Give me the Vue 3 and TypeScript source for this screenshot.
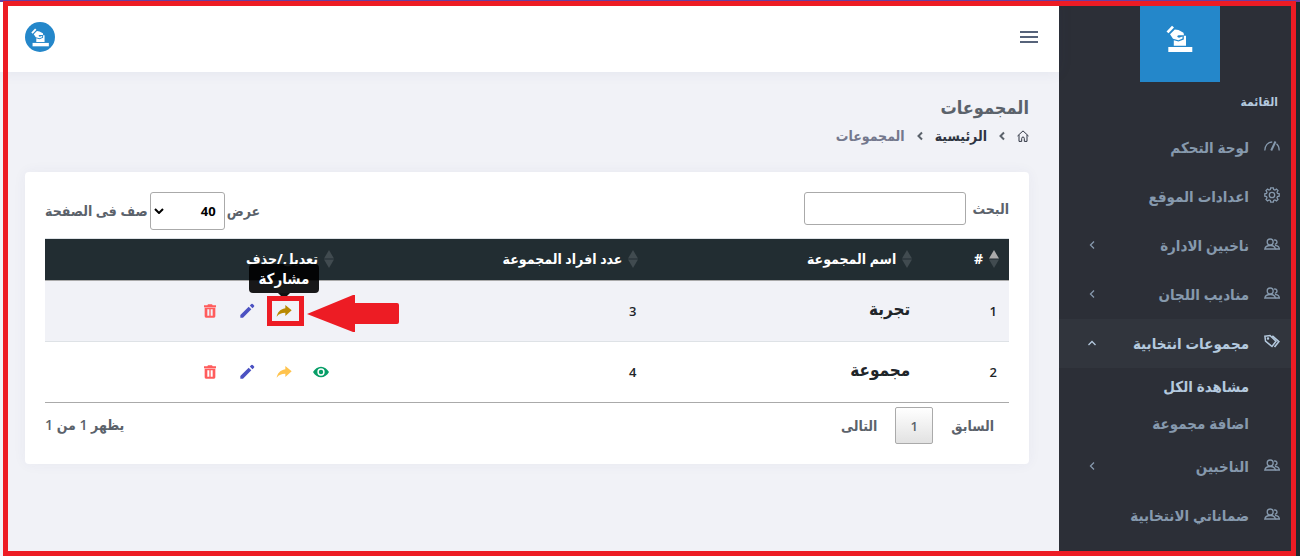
<script setup lang="ts">
import { ref } from 'vue'

interface MenuItem {
  label: string
  icon: 'gauge' | 'gear' | 'users' | 'tags'
  arrow?: boolean
  active?: boolean
  children?: { label: string; active?: boolean }[]
}

interface Group {
  id: number
  name: string
  members: number
  annotated?: boolean
}

const menu: MenuItem[] = [
  { label: 'لوحة التحكم', icon: 'gauge' },
  { label: 'اعدادات الموقع', icon: 'gear' },
  { label: 'ناخبين الادارة', icon: 'users', arrow: true },
  { label: 'مناديب اللجان', icon: 'users', arrow: true },
  {
    label: 'مجموعات انتخابية',
    icon: 'tags',
    arrow: true,
    active: true,
    children: [{ label: 'مشاهدة الكل', active: true }, { label: 'اضافة مجموعة' }],
  },
  { label: 'الناخبين', icon: 'users', arrow: true },
  { label: 'ضماناتي الانتخابية', icon: 'users' },
]

const columns = ['#', 'اسم المجموعة', 'عدد افراد المجموعة', 'تعديل/حذف']

const groups: Group[] = [
  { id: 1, name: 'تجربة', members: 3, annotated: true },
  { id: 2, name: 'مجموعة', members: 4 },
]

const logoPaths = [
  'M.5 6.500 6 .8 8 2.600 2.500 8.300Z',
  'M4 9.200 8.800 4.600 12.500 5 17.500 7.800 18 10.200H12.500Q10.500 10.800 11.500 12L13 12.800 16.500 11.500V13.500L12.500 15.200 7 13.800Z',
  'M7.800 15.200 12.500 16.500 17.800 14.500V10.800H20V20.700H7.800Z',
  'M2.300 22H26.300V27H2.300Z',
]

const search = ref('')
const pageSize = ref('40')
</script>

<template>
  <div class="app" dir="rtl" lang="ar">
    <aside class="sidebar">
      <a class="brand" href="#" aria-label="الرئيسية">
        <svg class="brand-icon" viewBox="0 0 28 28" aria-hidden="true">
          <path v-for="d in logoPaths" :key="d" :d="d" fill="#fff" />
        </svg>
      </a>
      <p class="menu-title">القائمة</p>
      <nav>
        <ul class="menu">
          <li v-for="item in menu" :key="item.label">
            <a class="menu-link" :class="{ active: item.active }" href="#">
              <svg class="menu-icon" viewBox="0 0 16 16" aria-hidden="true">
                <g v-if="item.icon === 'gauge'">
                  <path d="M.8 12.500C.8 7.500 4 4 8.200 4M12.500 5.800C14.500 7.500 15.200 10 15.200 12.500" />
                  <path d="M7.200 12.500 11.500 3.500" stroke-width="2" />
                </g>
                <g v-else-if="item.icon === 'gear'">
                  <path d="M6.700.8h2.600l.4 1.800 1.200.5 1.600-1 1.500 1.500-1 1.600.5 1.200 1.700.4v2.400l-1.700.4-.5 1.200 1 1.600-1.500 1.500-1.600-1-1.200.5-.4 1.800H6.700l-.4-1.800-1.200-.5-1.600 1L2 12.400l1-1.600-.5-1.200-1.700-.4V6.800l1.700-.4L3 5.200 2 3.600l1.500-1.500 1.600 1 1.200-.5Z" />
                  <circle cx="8" cy="8" r="2.700" />
                </g>
                <g v-else-if="item.icon === 'users'">
                  <circle cx="6.200" cy="6" r="3" />
                  <path d="M.8 13C1.200 10.800 3 9.600 6.200 9.500S11 11 11.500 13Z" />
                  <path d="M10 4.200c1.800-.6 3 .4 3 1.900 0 1.200-.9 2.100-2.200 2.300M11 9.700c2.600-.4 4 1.100 4.400 3.300H11.500" />
                </g>
                <g v-else>
                  <path d="M.9 2.200 6 1.500 12 7.300 8 12.500 1.500 7Z" stroke-width="1.500" />
                  <path d="M8.300 1.800 14.800 7.700 10.500 13" stroke-width="1.700" />
                  <circle cx="4" cy="4.500" r=".6" />
                </g>
              </svg>
              <span>{{ item.label }}</span>
              <svg v-if="item.arrow" class="menu-arrow" viewBox="0 0 10 10" aria-hidden="true">
                <path :d="item.active ? 'M1.500 7 5 3.500 8.500 7' : 'M7 1.500 3.500 5 7 8.500'" />
              </svg>
            </a>
            <ul v-if="item.children" class="submenu">
              <li v-for="child in item.children" :key="child.label">
                <a class="submenu-link" :class="{ active: child.active }" href="#">{{ child.label }}</a>
              </li>
            </ul>
          </li>
        </ul>
      </nav>
    </aside>

    <div class="main">
      <header class="topbar">
        <button class="toggle" type="button" aria-label="القائمة"><i></i><i></i><i></i></button>
        <button class="avatar" type="button" aria-label="الحساب">
          <svg viewBox="0 0 28 28" aria-hidden="true">
            <path v-for="d in logoPaths" :key="d" :d="d" fill="#fff" />
          </svg>
        </button>
      </header>

      <main class="content">
        <h1 class="title">المجموعات</h1>
        <nav class="crumbs" aria-label="مسار التنقل">
          <a href="#" aria-label="الرئيسية">
            <svg class="home" viewBox="0 0 12 12" aria-hidden="true">
              <path d="M.5 6 6 .9 11.500 6M2 5v6.400h2.700V8.500Q4.700 7 6 7t1.300 1.500v2.900H10V5" />
            </svg>
          </a>
          <svg class="sep" viewBox="0 0 6 10" aria-hidden="true"><path d="M5 1.500 1.500 5 5 8.500" /></svg>
          <a href="#">الرئيسية</a>
          <svg class="sep" viewBox="0 0 6 10" aria-hidden="true"><path d="M5 1.500 1.500 5 5 8.500" /></svg>
          <span>المجموعات</span>
        </nav>

        <section class="card">
          <div class="controls">
            <div class="field search">
              <label for="search">البحث</label>
              <input id="search" v-model="search" type="search" />
            </div>
            <div class="field">
              <label for="size">عرض</label>
              <div class="select">
                <select id="size" v-model="pageSize">
                  <option>10</option>
                  <option>40</option>
                  <option>100</option>
                </select>
                <svg viewBox="0 0 10 6" aria-hidden="true"><path d="M1 1 5 5 9 1" /></svg>
              </div>
              <span>صف فى الصفحة</span>
            </div>
          </div>

          <table class="table">
            <thead>
              <tr>
                <th v-for="(column, index) in columns" :key="column" scope="col">
                  <span class="head">
                    <svg class="sort" viewBox="0 0 10 18" aria-hidden="true">
                      <path :class="{ on: index === 0 }" d="M0 8.500 5 0 10 8.500Z" />
                      <path d="M0 9.500h10L5 18Z" />
                    </svg>
                    {{ column }}
                  </span>
                </th>
              </tr>
            </thead>
            <tbody>
              <tr v-for="group in groups" :key="group.id">
                <td>{{ group.id }}</td>
                <td class="name">{{ group.name }}</td>
                <td>{{ group.members }}</td>
                <td>
                  <div class="actions">
                    <button class="view" :class="{ concealed: group.annotated }" type="button" aria-label="عرض">
                      <svg viewBox="0 0 24 24" aria-hidden="true">
                        <path d="M12 4C7 4 2.700 7.200 0 12c2.700 4.800 7 8 12 8s9.300-3.200 12-8c-2.700-4.800-7-8-12-8ZM12 17.500a5.500 5.500 0 1 1 0-11 5.500 5.500 0 0 1 0 11Zm0-2.200a3.300 3.300 0 1 0 0-6.600 3.300 3.300 0 0 0 0 6.600Z" />
                      </svg>
                    </button>
                    <button class="share" :class="{ hovered: group.annotated }" type="button" aria-label="مشاركة">
                      <svg viewBox="0 0 24 24" aria-hidden="true">
                        <path d="M14 3v5C5.500 9.500 2 15 1 20.500 4.500 16 8 14.500 14 14.500V19.500L23.500 11Z" />
                      </svg>
                      <span v-if="group.annotated" class="tooltip" role="tooltip">مشاركة</span>
                      <span v-if="group.annotated" class="highlight"></span>
                      <svg v-if="group.annotated" class="pointer" viewBox="0 0 92 38" aria-hidden="true">
                        <path d="M0 19 46 0H48V8H90Q92 8 92 10V27Q92 29 90 29H48V37H46Z" />
                      </svg>
                    </button>
                    <button class="edit" type="button" aria-label="تعديل">
                      <svg viewBox="0 0 24 24" aria-hidden="true">
                        <path d="M2 18v4h4L18.500 9.500l-4-4ZM22.500 5.500q1-1 0-2l-2-2q-1-1-2 0l-2.300 2.300 4 4Z" />
                      </svg>
                    </button>
                    <button class="delete" type="button" aria-label="حذف">
                      <svg viewBox="0 0 24 24" aria-hidden="true">
                        <path fill-rule="evenodd" d="M3 3.500h5L9 2h6l1 1.500h5V6.500H3ZM4 7h16V20q0 2-2 2H6Q4 22 4 20ZM8 9.500v9.500H11V9.500Zm5 0v9.500H16V9.500Z" />
                      </svg>
                    </button>
                  </div>
                </td>
              </tr>
            </tbody>
          </table>

          <footer class="footer">
            <div class="pages">
              <button type="button">السابق</button>
              <button class="current" type="button" aria-current="page">1</button>
              <button type="button">التالى</button>
            </div>
            <span>يظهر 1 من 1</span>
          </footer>
        </section>
      </main>
    </div>

    <div class="edge-top"></div>
    <div class="edge-side"></div>
    <div class="frame"></div>
  </div>
</template>

<style>
body {
  margin: 0;
  background: #f1f2f7;
}
</style>

<style scoped>
.app {
  position: relative;
  display: flex;
  min-height: 100vh;
  box-sizing: border-box;
  overflow: hidden;
  color: #5b626b;
  font-family: "Open Sans", "DejaVu Sans Condensed", "DejaVu Sans", sans-serif;
  font-size: 14px;
  font-weight: 600;
  line-height: 20px;
}

.app *,
.app *::before,
.app *::after {
  box-sizing: border-box;
}

a {
  color: inherit;
  text-decoration: none;
}

button,
input,
select {
  font: inherit;
  color: inherit;
}

button {
  padding: 0;
  border: 0;
  background: none;
}

ul {
  margin: 0;
  padding: 0;
  list-style: none;
}

.sidebar {
  flex: none;
  width: 241px;
  background: #2c2f37;
  color: #8699ad;
  font-size: 15px;
}

.brand {
  display: flex;
  justify-content: center;
  width: 80px;
  height: 82px;
  margin: 0 auto;
  padding-top: 25px;
  background: #2487ca;
}

.brand-icon {
  width: 28px;
  height: 28px;
}

.menu-title {
  margin: 0;
  padding: 10px 22px 11px;
  color: #b4c9de;
  font-size: 12px;
}

.menu-link {
  display: flex;
  align-items: center;
  height: 49px;
  padding: 0 20px 2px 28px;
  gap: 15px;
}

.menu-link.active {
  background: #31353d;
}

.active {
  color: #b4c9de;
  font-weight: 700;
}

.menu-icon {
  width: 16px;
  height: 16px;
  margin-bottom: 2px;
  fill: none;
  stroke: currentColor;
  stroke-width: 1.3;
}

.menu-arrow {
  width: 10px;
  height: 10px;
  margin-inline-start: auto;
  fill: none;
  stroke: currentColor;
  stroke-width: 1.3;
}

.submenu-link {
  display: block;
  padding: 8px 51px 9px;
}

.main {
  flex: 1;
  min-width: 0;
}

.topbar {
  display: flex;
  align-items: center;
  justify-content: space-between;
  height: 72px;
  padding: 2px 21px 0 25px;
  background: #fff;
  box-shadow: 0 0 14px rgba(50, 60, 110, 0.08);
}

.toggle {
  display: grid;
  gap: 3px;
  width: 18px;
}

.toggle i {
  height: 2px;
  background: #56637a;
}

.avatar {
  display: grid;
  place-items: center;
  width: 30px;
  height: 30px;
  border-radius: 50%;
  background: #2487ca;
}

.avatar svg {
  width: 19px;
  height: 19px;
}

.content {
  padding: 22px 30px 24px 25px;
}

.title {
  margin: 0;
  font-size: 18px;
  font-weight: 600;
  line-height: 26px;
}

.crumbs {
  display: flex;
  align-items: center;
  height: 32px;
  color: #74788d;
}

.crumbs a {
  display: flex;
  color: #2f3542;
}

.home {
  width: 12px;
  height: 12px;
  fill: none;
  stroke: currentColor;
}

.sep {
  width: 6px;
  height: 10px;
  margin: 0 12px;
  fill: none;
  stroke: #5b626b;
  stroke-width: 2;
}

.card {
  margin-top: 20px;
  padding: 20px;
  border-radius: 4px;
  background: #fff;
  box-shadow: 0 0 14px rgba(50, 60, 110, 0.05);
}

.controls {
  display: flex;
  justify-content: space-between;
  align-items: flex-start;
  height: 46px;
}

.field {
  display: flex;
  align-items: center;
  gap: 2px;
}

.search {
  gap: 6px;
}

.search input {
  width: 162px;
  height: 33px;
  border: 1px solid #aaa;
  border-radius: 3px;
  background: #fff;
}

.select {
  position: relative;
  width: 75px;
}

.select select {
  display: block;
  width: 100%;
  height: 38px;
  padding: 0 8px;
  border: 1px solid #aaa;
  border-radius: 3px;
  background: #fff;
  color: #000;
  font-size: 13px;
  font-weight: 700;
  appearance: none;
}

.select svg {
  position: absolute;
  left: 4px;
  top: 16px;
  width: 10px;
  height: 6px;
  fill: none;
  stroke: #000;
  stroke-width: 2;
  pointer-events: none;
}

.table {
  width: 100%;
  table-layout: fixed;
  border-collapse: separate;
  border-spacing: 0;
  border-bottom: 1px solid #aaa;
  color: #212529;
}

th {
  height: 43px;
  padding: 0 10px 2px 0;
  border-top: 1px solid #dee2e6;
  border-bottom: 1px solid #aaa;
  background: #222d32;
  color: #fff;
  font-weight: 700;
  text-align: right;
}

th:first-child {
  width: 9%;
}

th:nth-child(2) {
  width: 28.4%;
}

th:nth-child(3) {
  width: 31.6%;
}

.head {
  display: flex;
  align-items: center;
  gap: 6px;
}

.sort {
  width: 10px;
  height: 18px;
  fill: #414b50;
}

.sort .on {
  fill: #aaa;
}

td {
  height: 60px;
  padding: 0 12px 0 0;
  font-size: 13px;
  text-align: right;
}

td:last-child {
  padding-right: 15px;
}

tbody tr:first-child td {
  height: 61px;
  background: #f1f2f7;
  border-bottom: 1px solid #dee2e6;
}

td.name {
  padding-bottom: 4px;
  font-size: 17px;
}

.actions {
  display: flex;
  gap: 21px;
}

.actions button {
  position: relative;
  display: flex;
}

.actions button > svg:first-child {
  width: 16px;
  height: 16px;
  fill: currentColor;
}

.view {
  color: #079e67;
}

.view.concealed {
  visibility: hidden;
}

.share {
  color: #ffc34d;
}

.share.hovered {
  color: #b98900;
}

.edit {
  color: #4c52c2;
}

.delete {
  color: #ff5c5c;
}

.actions .tooltip {
  position: absolute;
  bottom: 26px;
  left: 50%;
  width: 70px;
  height: 29px;
  margin-left: -35px;
  border-radius: 4px;
  background: rgba(0, 0, 0, 0.9);
  color: #fff;
  font-size: 15px;
  line-height: 28px;
  text-align: center;
}

.tooltip::after {
  content: "";
  position: absolute;
  top: 100%;
  left: 50%;
  margin-left: -6px;
  border: 6px solid transparent;
  border-top-color: #111;
  border-bottom: 0;
}

.highlight {
  position: absolute;
  top: -7px;
  left: -9px;
  width: 37px;
  height: 30px;
  border: 5px solid #ed1c24;
}

.pointer {
  position: absolute;
  top: -8px;
  left: 31px;
  width: 92px;
  height: 38px;
  fill: #ed1c24;
}

.footer {
  display: flex;
  align-items: flex-start;
  justify-content: space-between;
  padding-top: 4px;
}

.footer > span {
  padding-top: 8px;
}

.pages {
  display: flex;
  gap: 3px;
}

.pages button {
  height: 37px;
  padding: 0 15px;
}

.pages .current {
  width: 38px;
  padding: 0;
  border: 1px solid #aaa;
  border-radius: 2px;
  background: linear-gradient(#fff, #e2e2e2);
  font-size: 13px;
}

.edge-top {
  position: absolute;
  inset: 0 0 auto;
  height: 2px;
  background: #6b3fa0;
}

.edge-side {
  position: absolute;
  inset: 2px 0 0 auto;
  width: 4px;
  background: #1f2a2f;
}

.frame {
  position: absolute;
  inset: 1px 4px 0 3px;
  border: 5px solid #ed1c24;
  pointer-events: none;
}
</style>
